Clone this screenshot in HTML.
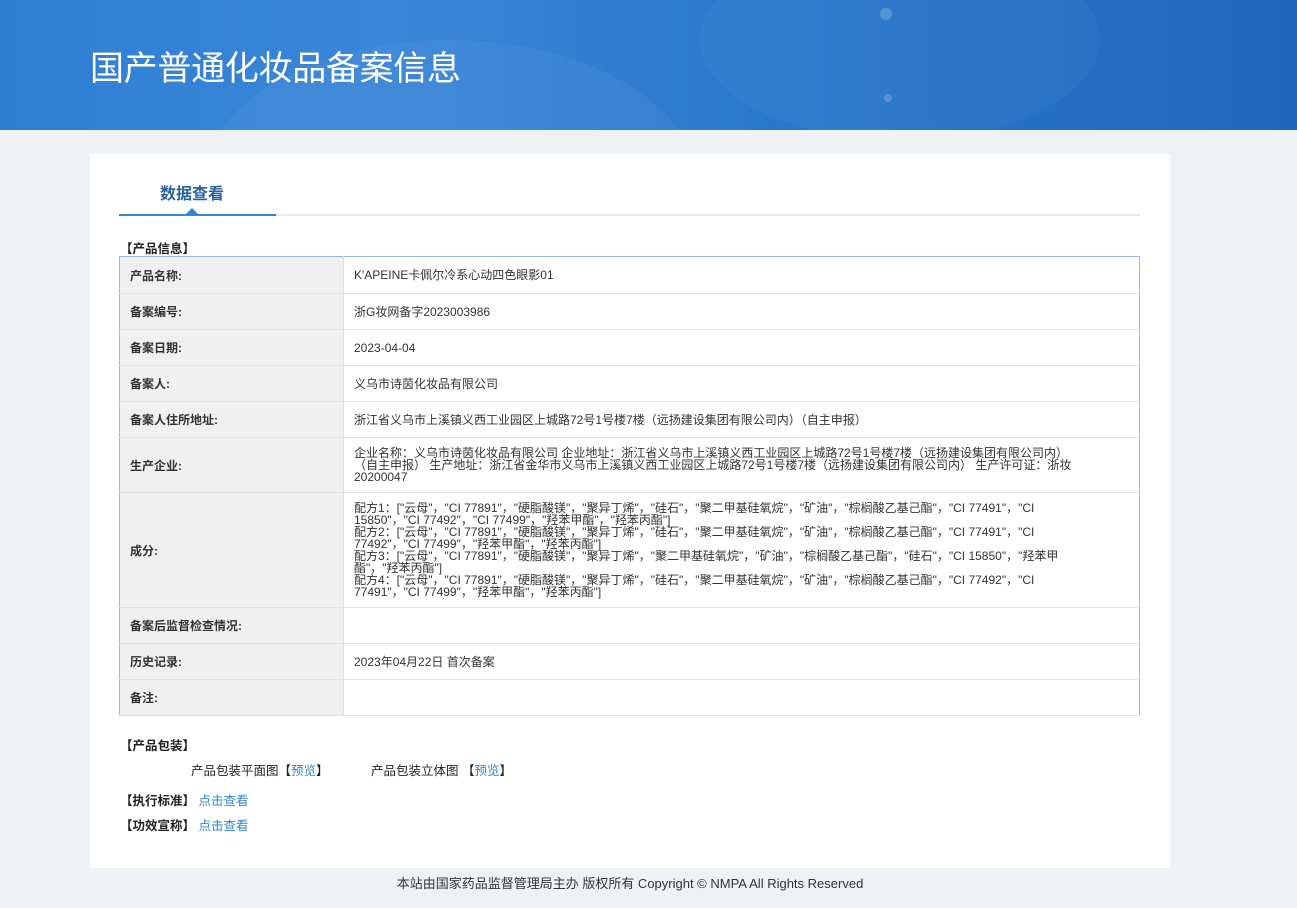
<!DOCTYPE html>
<html><head><meta charset="utf-8"><style>
*{margin:0;padding:0;box-sizing:border-box}
body{width:1297px;height:908px;background:#eef2f5;font-family:"Liberation Sans","Noto Sans CJK SC",sans-serif;color:#333;font-size:12.5px;position:relative;overflow:hidden}
.hdr{position:absolute;left:0;top:0;width:1297px;height:130px;background:linear-gradient(90deg,#2f7fd4 0%,#3a86d8 30%,#2a78cc 60%,#1f68bd 100%);overflow:hidden}
.hdr h1{position:absolute;left:90px;top:41px;color:#fff;font-size:34px;font-weight:normal;font-family:"Noto Sans CJK SC",sans-serif;letter-spacing:-0.3px}
.c1{position:absolute;border-radius:50%;background:rgba(255,255,255,0.05)}
.panel{position:absolute;left:90px;top:154px;width:1080px;height:714px;background:#fff}
.tab{position:absolute;left:70px;top:26px;font-size:16px;font-weight:bold;color:#2a5fa0}
.line{position:absolute;left:29px;top:60px;width:1021px;height:2px;background:#e6e9ee}
.line2{position:absolute;left:29px;top:60px;width:157px;height:2px;background:#2e86d6}
.tri{position:absolute;left:96px;top:54px;width:0;height:0;border-left:6px solid transparent;border-right:6px solid transparent;border-bottom:6px solid #2e86d6}
.sec{position:absolute;font-weight:bold;color:#222;font-size:12.5px}
table{position:absolute;left:29px;top:102px;width:1021px;border-collapse:collapse;border:1px solid #9bb8e6}
td{border-bottom:1px solid #e2e2e2;font-size:12px;vertical-align:middle}
td.l{width:224px;background:#f0f0f0;padding-left:10px;font-weight:bold;color:#333;border-right:1px solid #e2e2e2}
td.v{padding:0 52px 0 10px;line-height:12px;color:#333}
a{color:#2e86d6;text-decoration:none}
.foot{position:absolute;top:873px;left:0;width:1260px;text-align:center;font-size:13px;color:#333}
</style></head><body>
<div class="hdr">
<div class="c1" style="left:200px;top:40px;width:500px;height:300px;background:rgba(120,170,230,0.12)"></div>
<div class="c1" style="left:700px;top:-60px;width:400px;height:200px;background:rgba(255,255,255,0.03)"></div>
<div class="c1" style="left:880px;top:8px;width:12px;height:12px;background:rgba(255,255,255,0.2)"></div>
<div class="c1" style="left:884px;top:94px;width:8px;height:8px;background:rgba(255,255,255,0.2)"></div>
<h1>国产普通化妆品备案信息</h1>
</div>
<div class="panel">
<div class="tab">数据查看</div>
<div class="line"></div><div class="line2"></div><div class="tri"></div>
<div class="sec" style="left:30px;top:84px">【产品信息】</div>
<table>
<tr style="height:37px"><td class="l">产品名称:</td><td class="v">K'APEINE卡佩尔冷系心动四色眼影01</td></tr>
<tr style="height:36px"><td class="l">备案编号:</td><td class="v">浙G妆网备字2023003986</td></tr>
<tr style="height:36px"><td class="l">备案日期:</td><td class="v">2023-04-04</td></tr>
<tr style="height:36px"><td class="l">备案人:</td><td class="v">义乌市诗茵化妆品有限公司</td></tr>
<tr style="height:36px"><td class="l">备案人住所地址:</td><td class="v">浙江省义乌市上溪镇义西工业园区上城路72号1号楼7楼（远扬建设集团有限公司内）（自主申报）</td></tr>
<tr style="height:55px"><td class="l">生产企业:</td><td class="v">企业名称：义乌市诗茵化妆品有限公司 企业地址：浙江省义乌市上溪镇义西工业园区上城路72号1号楼7楼（远扬建设集团有限公司内）<br>（自主申报） 生产地址：浙江省金华市义乌市上溪镇义西工业园区上城路72号1号楼7楼（远扬建设集团有限公司内） 生产许可证：浙妆<br>20200047</td></tr>
<tr style="height:115px"><td class="l">成分:</td><td class="v">配方1：["云母"，"CI 77891"，"硬脂酸镁"，"聚异丁烯"，"硅石"，"聚二甲基硅氧烷"，"矿油"，"棕榈酸乙基己酯"，"CI 77491"，"CI<br>15850"，"CI 77492"，"CI 77499"，"羟苯甲酯"，"羟苯丙酯"]<br>配方2：["云母"，"CI 77891"，"硬脂酸镁"，"聚异丁烯"，"硅石"，"聚二甲基硅氧烷"，"矿油"，"棕榈酸乙基己酯"，"CI 77491"，"CI<br>77492"，"CI 77499"，"羟苯甲酯"，"羟苯丙酯"]<br>配方3：["云母"，"CI 77891"，"硬脂酸镁"，"聚异丁烯"，"聚二甲基硅氧烷"，"矿油"，"棕榈酸乙基己酯"，"硅石"，"CI 15850"，"羟苯甲<br>酯"，"羟苯丙酯"]<br>配方4：["云母"，"CI 77891"，"硬脂酸镁"，"聚异丁烯"，"硅石"，"聚二甲基硅氧烷"，"矿油"，"棕榈酸乙基己酯"，"CI 77492"，"CI<br>77491"，"CI 77499"，"羟苯甲酯"，"羟苯丙酯"]</td></tr>
<tr style="height:36px"><td class="l">备案后监督检查情况:</td><td class="v"></td></tr>
<tr style="height:36px"><td class="l">历史记录:</td><td class="v">2023年04月22日 首次备案</td></tr>
<tr style="height:36px"><td class="l">备注:</td><td class="v"></td></tr>
</table>
<div class="sec" style="left:30px;top:581px">【产品包装】</div>
<div style="position:absolute;left:101px;top:606px;color:#222">产品包装平面图【<a>预览</a>】</div>
<div style="position:absolute;left:281px;top:606px;color:#222">产品包装立体图 【<a>预览</a>】</div>
<div class="sec" style="left:30px;top:636px">【执行标准】 <a style="font-weight:normal">点击查看</a></div>
<div class="sec" style="left:30px;top:661px">【功效宣称】 <a style="font-weight:normal">点击查看</a></div>
</div>
<div class="foot">本站由国家药品监督管理局主办 版权所有 Copyright © NMPA All Rights Reserved</div>
</body></html>
